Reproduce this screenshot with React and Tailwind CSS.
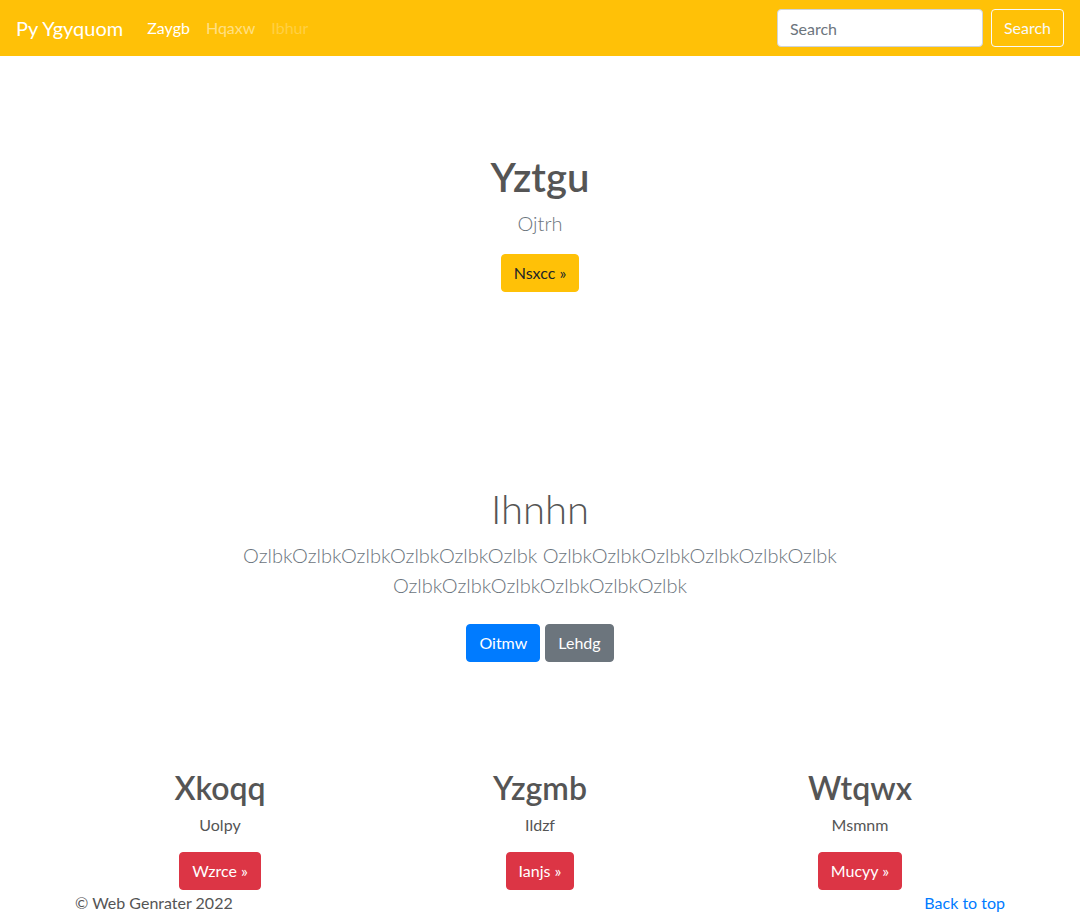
export default function App() {
  return (
    <div className="min-h-screen bg-white font-['Lato',sans-serif] text-[#555] text-base">
      <nav className="h-14 bg-[#ffc107] flex items-center px-4">
        <a className="text-xl text-white mr-4 leading-[30px]" href="#">Py Ygyquom</a>
        <ul className="flex">
          <li><a className="px-2 text-white leading-6" href="#">Zaygb</a></li>
          <li><a className="px-2 text-white/50 leading-6" href="#">Hqaxw</a></li>
          <li><a className="px-2 text-white/25 leading-6" href="#">Ibhur</a></li>
        </ul>
        <form className="ml-auto flex items-center">
          <input
            className="w-[206px] h-[38px] px-3 bg-white border border-[#ced4da] rounded text-[#495057] placeholder:text-[#6c757d] outline-none"
            placeholder="Search"
          />
          <button type="button" className="ml-2 h-[38px] px-3 border border-[#f8f9fa] text-[#f8f9fa] rounded leading-6">
            Search
          </button>
        </form>
      </nav>

      <main>
        <section className="pt-[97px] text-center">
          <h1 className="text-[40px] leading-[48px] font-semibold">Yztgu</h1>
          <p className="mt-[7px] text-xl font-light leading-[30px] text-[#6c757d]">Ojtrh</p>
          <a href="#" className="mt-[16px] inline-block px-3 py-[6px] leading-6 border border-[#ffc107] bg-[#ffc107] text-[#212529] rounded">
            Nsxcc »
          </a>
        </section>

        <section className="mt-[193px] text-center">
          <h1 className="text-[40px] leading-[48px] font-light">Ihnhn</h1>
          <p className="mt-[7px] mx-auto max-w-[610px] text-xl font-light leading-[30px] text-[#6c757d]">
            OzlbkOzlbkOzlbkOzlbkOzlbkOzlbk OzlbkOzlbkOzlbkOzlbkOzlbkOzlbk OzlbkOzlbkOzlbkOzlbkOzlbkOzlbk
          </p>
          <div className="mt-6 flex justify-center gap-[5px]">
            <a href="#" className="inline-block px-3 py-[6px] leading-6 border border-[#007bff] bg-[#007bff] text-white rounded">Oitmw</a>
            <a href="#" className="inline-block px-3 py-[6px] leading-6 border border-[#6c757d] bg-[#6c757d] text-white rounded">Lehdg</a>
          </div>
        </section>

        <section className="mt-[107px] mx-auto w-[960px] grid grid-cols-3 text-center">
          {[
            ["Xkoqq", "Uolpy", "Wzrce »"],
            ["Yzgmb", "Ildzf", "Ianjs »"],
            ["Wtqwx", "Msmnm", "Mucyy »"],
          ].map(([h, p, b]) => (
            <div key={h} className="px-[15px]">
              <h2 className="text-[32px] leading-[38px] font-semibold">{h}</h2>
              <p className="mt-[6px] leading-6">{p}</p>
              <a href="#" className="mt-[15px] inline-block px-3 py-[6px] leading-6 border border-[#dc3545] bg-[#dc3545] text-white rounded">{b}</a>
            </div>
          ))}
        </section>

        <footer className="mt-px mx-auto w-[960px] px-[15px] flex justify-between leading-6">
          <p>© Web Genrater 2022</p>
          <a href="#" className="text-[#007bff]">Back to top</a>
        </footer>
      </main>
    </div>
  );
}
